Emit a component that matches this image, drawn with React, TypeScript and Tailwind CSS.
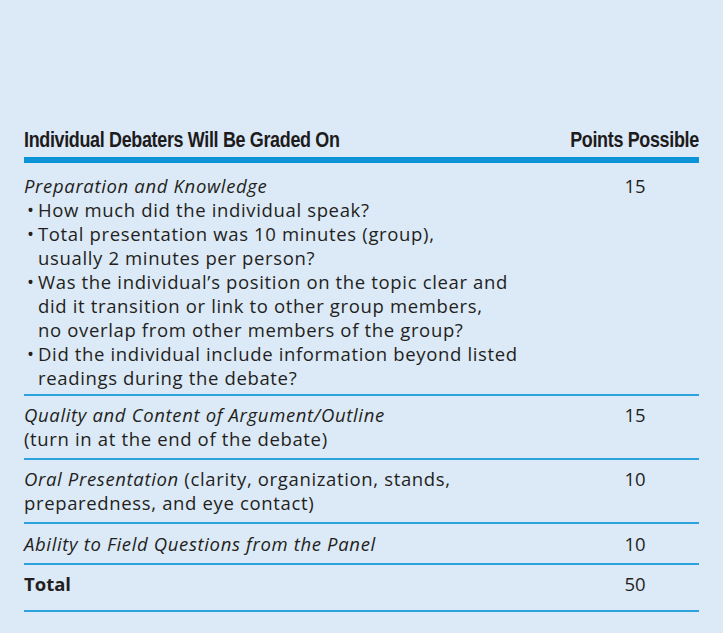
const body = "font-['Open_Sans',sans-serif] text-[18.5px] leading-[24px] tracking-[0.65px] text-[#231f20]";
const cond = "font-['Liberation_Sans',sans-serif] font-bold text-[22px] leading-[26px] tracking-[-0.4px] text-[#1d1b1c] whitespace-nowrap inline-block";

const bullets = [
  ['How much did the individual speak?'],
  ['Total presentation was 10 minutes (group),', 'usually 2 minutes per person?'],
  [
    'Was the individual\u2019s position on the topic clear and',
    'did it transition or link to other group members,',
    'no overlap from other members of the group?'
  ],
  ['Did the individual include information beyond listed', 'readings during the debate?']
];

function Row({ children, points, className = '' }: { children: React.ReactNode; points: string; className?: string }) {
  return (
    <div className={`grid grid-cols-[1fr_128px] border-b-2 border-[#2aa3dd] ${className}`}>
      <div className="whitespace-nowrap">{children}</div>
      <div className="text-center tracking-normal">{points}</div>
    </div>
  );
}

export default function App() {
  return (
    <div className={`h-[633px] w-[723px] bg-[#dce9f7] px-[24px] pt-[127px] ${body}`}>
      <div className="flex items-end justify-between border-b-[6px] border-[#0b93d6] pb-[4px]">
        <span className={`${cond} origin-left scale-x-[0.815]`}>Individual Debaters Will Be Graded On</span>
        <span className={`${cond} origin-right scale-x-[0.815]`}>Points Possible</span>
      </div>

      <Row points="15" className="pb-[4px] pt-[11px]">
        <div className="italic">Preparation and Knowledge</div>
        {bullets.map((lines, i) => (
          <div key={i} className="flex">
            <span className="w-[14px] shrink-0 pl-[3px]">•</span>
            <div>
              {lines.map((line) => (
                <div key={line}>{line}</div>
              ))}
            </div>
          </div>
        ))}
      </Row>

      <Row points="15" className="py-[7px]">
        <div className="italic">Quality and Content of Argument/Outline</div>
        <div>(turn in at the end of the debate)</div>
      </Row>

      <Row points="10" className="py-[7px]">
        <div>
          <span className="italic">Oral Presentation</span> (clarity, organization, stands,
        </div>
        <div>preparedness, and eye contact)</div>
      </Row>

      <Row points="10" className="pb-[7px] pt-[8px]">
        <div className="italic">Ability to Field Questions from the Panel</div>
      </Row>

      <Row points="50" className="pb-[14px] pt-[7px]">
        <div className="font-bold tracking-normal">Total</div>
      </Row>
    </div>
  );
}
